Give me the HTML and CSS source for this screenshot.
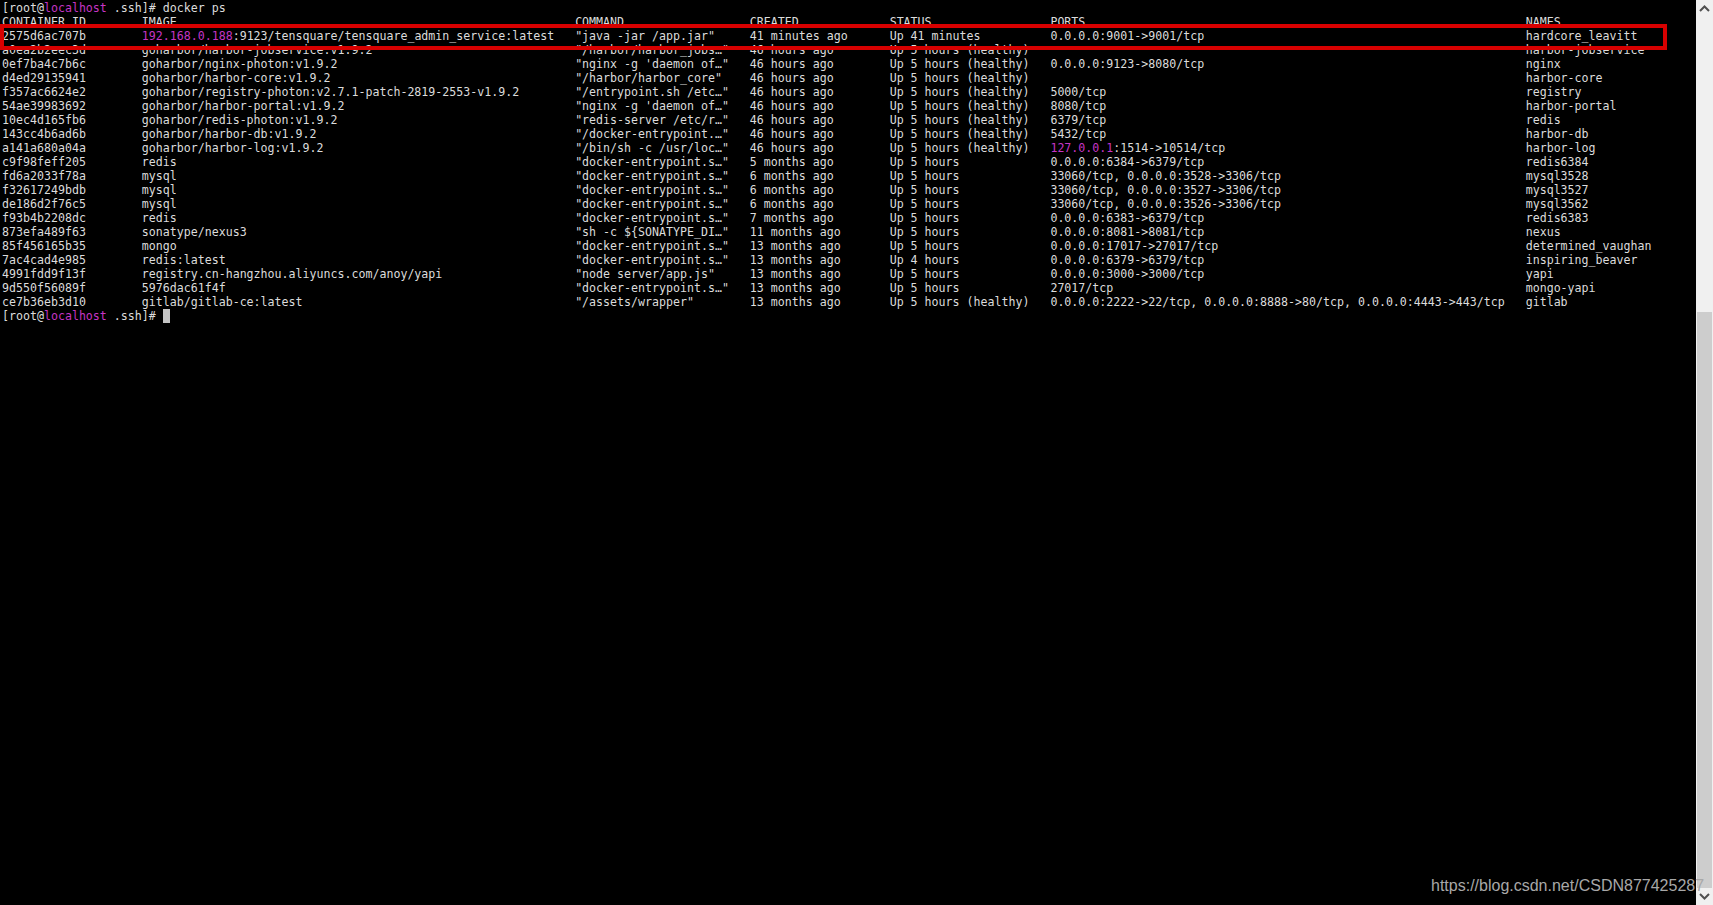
FILE: index.html
```html
<!DOCTYPE html>
<html lang="en">
<head>
<meta charset="utf-8">
<title>docker ps</title>
<link rel="stylesheet" href="styles.css">
</head>
<body>
<main class="terminal">
  <div class="line">[root@<span class="host">localhost</span> .ssh]# docker ps</div>
  <div class="row"><span>CONTAINER ID</span><span>IMAGE</span><span>COMMAND</span><span>CREATED</span><span>STATUS</span><span>PORTS</span><span>NAMES</span></div>
  <div class="row"><span>2575d6ac707b</span><span><span class="host">192.168.0.188</span>:9123/tensquare/tensquare_admin_service:latest</span><span>"java -jar /app.jar"</span><span>41 minutes ago</span><span>Up 41 minutes</span><span>0.0.0.0:9001-&gt;9001/tcp</span><span>hardcore_leavitt</span></div>
  <div class="row"><span>a0ea2b2eec3d</span><span>goharbor/harbor-jobservice:v1.9.2</span><span>"/harbor/harbor_jobs…"</span><span>46 hours ago</span><span>Up 5 hours (healthy)</span><span></span><span>harbor-jobservice</span></div>
  <div class="row"><span>0ef7ba4c7b6c</span><span>goharbor/nginx-photon:v1.9.2</span><span>"nginx -g 'daemon of…"</span><span>46 hours ago</span><span>Up 5 hours (healthy)</span><span>0.0.0.0:9123-&gt;8080/tcp</span><span>nginx</span></div>
  <div class="row"><span>d4ed29135941</span><span>goharbor/harbor-core:v1.9.2</span><span>"/harbor/harbor_core"</span><span>46 hours ago</span><span>Up 5 hours (healthy)</span><span></span><span>harbor-core</span></div>
  <div class="row"><span>f357ac6624e2</span><span>goharbor/registry-photon:v2.7.1-patch-2819-2553-v1.9.2</span><span>"/entrypoint.sh /etc…"</span><span>46 hours ago</span><span>Up 5 hours (healthy)</span><span>5000/tcp</span><span>registry</span></div>
  <div class="row"><span>54ae39983692</span><span>goharbor/harbor-portal:v1.9.2</span><span>"nginx -g 'daemon of…"</span><span>46 hours ago</span><span>Up 5 hours (healthy)</span><span>8080/tcp</span><span>harbor-portal</span></div>
  <div class="row"><span>10ec4d165fb6</span><span>goharbor/redis-photon:v1.9.2</span><span>"redis-server /etc/r…"</span><span>46 hours ago</span><span>Up 5 hours (healthy)</span><span>6379/tcp</span><span>redis</span></div>
  <div class="row"><span>143cc4b6ad6b</span><span>goharbor/harbor-db:v1.9.2</span><span>"/docker-entrypoint.…"</span><span>46 hours ago</span><span>Up 5 hours (healthy)</span><span>5432/tcp</span><span>harbor-db</span></div>
  <div class="row"><span>a141a680a04a</span><span>goharbor/harbor-log:v1.9.2</span><span>"/bin/sh -c /usr/loc…"</span><span>46 hours ago</span><span>Up 5 hours (healthy)</span><span><span class="host">127.0.0.1</span>:1514-&gt;10514/tcp</span><span>harbor-log</span></div>
  <div class="row"><span>c9f98feff205</span><span>redis</span><span>"docker-entrypoint.s…"</span><span>5 months ago</span><span>Up 5 hours</span><span>0.0.0.0:6384-&gt;6379/tcp</span><span>redis6384</span></div>
  <div class="row"><span>fd6a2033f78a</span><span>mysql</span><span>"docker-entrypoint.s…"</span><span>6 months ago</span><span>Up 5 hours</span><span>33060/tcp, 0.0.0.0:3528-&gt;3306/tcp</span><span>mysql3528</span></div>
  <div class="row"><span>f32617249bdb</span><span>mysql</span><span>"docker-entrypoint.s…"</span><span>6 months ago</span><span>Up 5 hours</span><span>33060/tcp, 0.0.0.0:3527-&gt;3306/tcp</span><span>mysql3527</span></div>
  <div class="row"><span>de186d2f76c5</span><span>mysql</span><span>"docker-entrypoint.s…"</span><span>6 months ago</span><span>Up 5 hours</span><span>33060/tcp, 0.0.0.0:3526-&gt;3306/tcp</span><span>mysql3562</span></div>
  <div class="row"><span>f93b4b2208dc</span><span>redis</span><span>"docker-entrypoint.s…"</span><span>7 months ago</span><span>Up 5 hours</span><span>0.0.0.0:6383-&gt;6379/tcp</span><span>redis6383</span></div>
  <div class="row"><span>873efa489f63</span><span>sonatype/nexus3</span><span>"sh -c ${SONATYPE_DI…"</span><span>11 months ago</span><span>Up 5 hours</span><span>0.0.0.0:8081-&gt;8081/tcp</span><span>nexus</span></div>
  <div class="row"><span>85f456165b35</span><span>mongo</span><span>"docker-entrypoint.s…"</span><span>13 months ago</span><span>Up 5 hours</span><span>0.0.0.0:17017-&gt;27017/tcp</span><span>determined_vaughan</span></div>
  <div class="row"><span>7ac4cad4e985</span><span>redis:latest</span><span>"docker-entrypoint.s…"</span><span>13 months ago</span><span>Up 4 hours</span><span>0.0.0.0:6379-&gt;6379/tcp</span><span>inspiring_beaver</span></div>
  <div class="row"><span>4991fdd9f13f</span><span>registry.cn-hangzhou.aliyuncs.com/anoy/yapi</span><span>"node server/app.js"</span><span>13 months ago</span><span>Up 5 hours</span><span>0.0.0.0:3000-&gt;3000/tcp</span><span>yapi</span></div>
  <div class="row"><span>9d550f56089f</span><span>5976dac61f4f</span><span>"docker-entrypoint.s…"</span><span>13 months ago</span><span>Up 5 hours</span><span>27017/tcp</span><span>mongo-yapi</span></div>
  <div class="row"><span>ce7b36eb3d10</span><span>gitlab/gitlab-ce:latest</span><span>"/assets/wrapper"</span><span>13 months ago</span><span>Up 5 hours (healthy)</span><span>0.0.0.0:2222-&gt;22/tcp, 0.0.0.0:8888-&gt;80/tcp, 0.0.0.0:4443-&gt;443/tcp</span><span>gitlab</span></div>
  <div class="line">[root@<span class="host">localhost</span> .ssh]# <span class="cursor"></span></div>
  <div class="highlight"></div>
</main>
<aside class="scrollbar">
  <div class="arrow">
    <svg width="11" height="7" viewBox="0 0 11 7"><path d="M1 6 L5.5 1.5 L10 6" fill="none" stroke="#505050" stroke-width="2"/></svg>
  </div>
  <div class="track"><div class="thumb"></div></div>
  <div class="arrow">
    <svg width="11" height="7" viewBox="0 0 11 7"><path d="M1 1 L5.5 5.5 L10 1" fill="none" stroke="#505050" stroke-width="2"/></svg>
  </div>
</aside>
<div class="watermark">https://blog.csdn.net/CSDN877425287</div>
</body>
</html>
```
FILE: styles.css
```css
html, body {
  margin: 0;
  height: 100%;
  overflow: hidden;
}
body {
  display: flex;
  position: relative;
  background: #000;
}
.terminal {
  position: relative;
  flex: 1;
  min-width: 0;
  padding: 1px 0 0 2px;
  color: #dcdcdc;
  font-family: "DejaVu Sans Mono", monospace;
  font-size: 11.627px;
  line-height: 14px;
}
.line {
  height: 14px;
  white-space: pre;
}
.row {
  display: grid;
  grid-template-columns: 20ch 62ch 25ch 20ch 23ch 68ch auto;
  height: 14px;
  white-space: pre;
}
.host {
  color: #c535c5;
}
.cursor {
  display: inline-block;
  width: 7px;
  height: 14px;
  background: #c4c4c4;
  vertical-align: top;
}
.highlight {
  position: absolute;
  left: 0;
  top: 24px;
  width: 1659px;
  height: 18px;
  border: 4px solid #d80000;
}
.scrollbar {
  flex: none;
  width: 17px;
  display: flex;
  flex-direction: column;
  background: #f0f0f0;
}
.arrow {
  flex: none;
  height: 17px;
  display: flex;
  align-items: center;
  justify-content: center;
}
.track {
  flex: 1;
  padding: 295px 1px 0;
  display: flex;
}
.thumb {
  flex: 1;
  background: #cdcdcd;
}
.watermark {
  position: absolute;
  left: 1431px;
  top: 877px;
  color: #a8a8a8;
  font-family: "Liberation Sans", Arial, sans-serif;
  font-size: 16px;
  line-height: 18px;
  white-space: nowrap;
}
```
